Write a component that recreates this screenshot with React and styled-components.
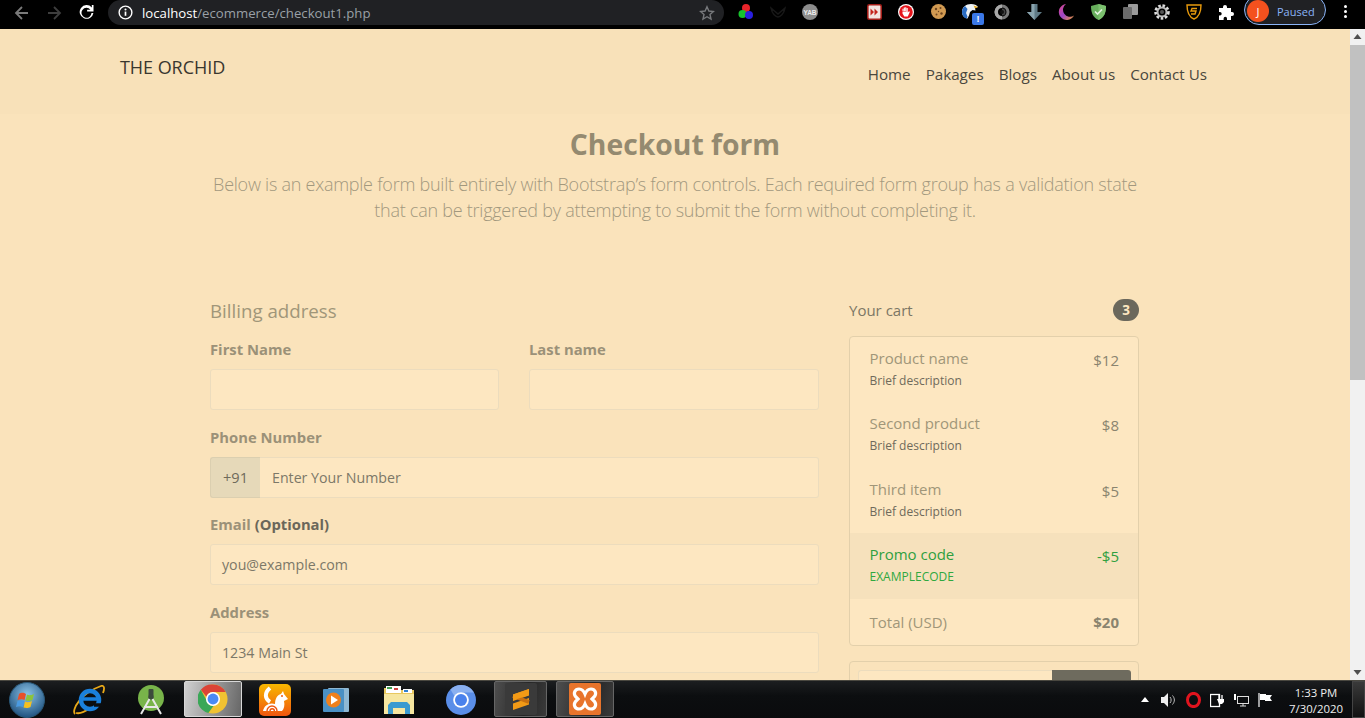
import React from "react";
import styled, { createGlobalStyle } from "styled-components";

const Global = createGlobalStyle`
  html, body { margin: 0; padding: 0; height: 100%; overflow: hidden; }
  body { font-family: "Open Sans", "Noto Sans", sans-serif; background: #000; }
  * { box-sizing: border-box; }
`;

const Screen = styled.div`
  width: 1365px; height: 718px; display: flex; flex-direction: column; overflow: hidden;
`;

/* ---------- browser toolbar ---------- */
const Toolbar = styled.header`
  height: 29px; flex: none; background: #000; display: flex; align-items: flex-start; overflow: hidden;
`;
const NavButtons = styled.div`
  width: 108px; height: 25px; padding-left: 6px; display: flex; align-items: center;
`;
const NavButton = styled.span`
  width: 32px; height: 23px; display: flex; align-items: center; justify-content: center;
`;
const Omnibox = styled.div`
  width: 616px; height: 25px; background: #202124; border-radius: 13px;
  display: flex; align-items: center; padding: 0 9px 0 10px; gap: 9px;
  font-size: 13.2px; color: #9aa0a6;
`;
const UrlText = styled.div`flex: 1; white-space: nowrap; strong { color: #fff; font-weight: 400; }`;
const Extensions = styled.div`display: flex; align-items: flex-start; height: 29px; margin-left: 6px;`;
const ExtSlot = styled.span`
  width: 32px; height: 23px; flex: none; display: flex; align-items: center; justify-content: center;
  position: relative;
`;
const ExtGap = styled.span`width: 32px; flex: none;`;
const ExtBadge = styled.span`
  position: absolute; right: 2px; top: 13px; width: 12px; height: 12px; background: #3b78e7; border-radius: 2px;
  color: #fff; font: 700 9px/12px "Liberation Sans", sans-serif; text-align: center;
`;
const ProfilePill = styled.div`
  width: 82px; height: 30px; margin: -5px 0 0 2px; border: 1px solid #8ab4f8; border-radius: 15px; background: #202124;
  display: flex; align-items: center; gap: 8px; padding: 2px 0 0 2px; color: #8ab4f8; font-size: 11px;
`;
const Avatar = styled.span`
  width: 22px; height: 22px; border-radius: 50%; background: #f4511e; color: #fff; font-size: 11px;
  display: flex; align-items: center; justify-content: center; flex: none;
`;
const MenuDots = styled.span`
  width: 20px; margin-left: 9px; display: flex; flex-direction: column; align-items: center; gap: 2px; padding-top: 5px;
  i { width: 3px; height: 3px; border-radius: 50%; background: #fff; display: block; }
`;

/* ---------- page ---------- */
const Middle = styled.div`flex: 1; min-height: 0; display: flex;`;
const Page = styled.main`
  flex: 1; min-width: 0; overflow: hidden; background: #fae3bb; color: #6f6a5b;
`;
const TopNav = styled.nav`
  height: 85px; background: #f8e1b9; padding: 0 143px 0 120px; display: flex; justify-content: space-between;
`;
const Brand = styled.a`
  font-size: 18px; line-height: 24px; color: #3a372f; margin-top: 26px; letter-spacing: -0.05px;
`;
const NavLinks = styled.ul`
  list-style: none; margin: 33px 0 0; padding: 0; display: flex; gap: 15px;
`;
const NavLink = styled.li`font-size: 15.2px; line-height: 24px; color: #4a473d;`;

const Hero = styled.section`text-align: center; padding-top: 11px; height: 182px;`;
const HeroTitle = styled.h2`
  margin: 0; font-size: 28.3px; line-height: 38px; font-weight: 700; color: #948a70;
`;
const Lead = styled.p`
  margin: 8px 0 0; font-size: 18px; line-height: 26px; font-weight: 300; color: #a2987e; letter-spacing: -0.25px;
`;
const Content = styled.div`
  width: 930px; margin-left: 210px; display: grid; grid-template-columns: 609px 290px; column-gap: 30px;
`;
const SectionTitle = styled.h4`
  margin: 1px 0 12px; font-size: 18.7px; line-height: 28px; font-weight: 400; color: #a09679;
`;
const FieldRow = styled.div`display: grid; grid-template-columns: 289px 290px; column-gap: 30px;`;
const Field = styled.div`margin-bottom: 14.5px;`;
const FieldLabel = styled.label`
  display: block; font-size: 14.8px; line-height: 24px; font-weight: 700; color: #9b9178; margin-bottom: 8px;
  span { color: #6b675a; }
`;
const InputBox = styled.div`
  height: 41px; border: 1px solid #ecdcbd; background: #fde7c1; border-radius: 3px; padding: 0 11px;
  font-size: 14.2px; line-height: 39px; color: #7c7868;
`;
const InputGroup = styled.div`display: flex;`;
const Prepend = styled.div`
  width: 50px; height: 41px; flex: none; border: 1px solid #dbcfb0; border-right: 0; background: #e6d9b9;
  border-radius: 3px 0 0 3px; text-align: center; font-size: 14.6px; line-height: 39px; color: #6f6a5b;
`;
const GroupInput = styled(InputBox)`flex: 1; border-radius: 0 3px 3px 0; border-left: 0; padding-left: 12px;`;

const CartHead = styled.div`
  height: 28px; margin: 0 0 12px; display: flex; align-items: center; justify-content: space-between;
  font-size: 15px; color: #7c7765;
`;
const Badge = styled.span`
  width: 26px; height: 22px; border-radius: 11px; background: #6b685c; color: #fde7c1;
  font-size: 13.5px; font-weight: 700; display: flex; align-items: center; justify-content: center;
`;
const CartList = styled.div`
  border: 1px solid #e3d0ab; border-radius: 4px; background: #fde7c1; overflow: hidden;
`;
const CartItem = styled.div`
  height: ${p => p.$h}px; padding: 9px 19px 0 19.5px; display: flex; justify-content: space-between;
  background: ${p => (p.$promo ? "#f6e1bc" : "transparent")};
  color: ${p => (p.$promo ? "#2f9f3f" : "#a09679")};
`;
const ItemName = styled.div`font-size: 15px; line-height: 24px;`;
const ItemDesc = styled.div`
  margin-top: 1px; font-size: 12px; line-height: 20px; color: ${p => (p.$promo ? "#2fa83f" : "#6f6a5b")};
`;
const ItemPrice = styled.div`
  font-size: 15px; line-height: 24px; margin-top: 2px;
  color: ${p => (p.$promo ? "#2f9f3f" : "#8a846f")};
  font-weight: ${p => (p.$bold ? 700 : 400)};
`;
const TotalName = styled(ItemName)`margin-top: 2px;`;
const PromoCard = styled.div`
  margin-top: 15px; height: 60px; border: 1px solid #e3d0ab; border-radius: 4px; background: #fae3bb; padding: 8px 7px 0 8px;
  display: flex;
`;
const PromoInput = styled.div`
  width: 195px; height: 41px; background: #fde7c1; border: 1px solid #ecdcbd; border-right: 0; border-radius: 3px 0 0 3px;
`;
const PromoButton = styled.div`
  width: 79px; height: 41px; background: #6e6b5e; border-radius: 0 3px 3px 0;
`;

/* ---------- scrollbar ---------- */
const Scrollbar = styled.aside`
  width: 15px; flex: none; background: #f1f1f1; display: flex; flex-direction: column; align-items: center;
`;
const ScrollArrow = styled.svg`width: 15px; height: 16px; flex: none;`;
const ScrollThumb = styled.div`width: 15px; height: 335px; background: #c1c1c1; flex: none;`;
const ScrollFill = styled.div`flex: 1;`;

/* ---------- taskbar ---------- */
const Taskbar = styled.footer`
  height: 38px; flex: none; display: flex; align-items: stretch; position: relative;
  background: linear-gradient(#1c1e20, #0c0e10 40%, #0a0b0d);
  border-top: 1px solid #4a4840; color: #fff;
`;
const TaskSlot = styled.span`
  width: ${p => p.$w}px; flex: none; display: flex; align-items: center; justify-content: center;
  margin-left: ${p => p.$ml || 0}px;
`;
const ActiveButton = styled(TaskSlot)`
  height: 36px; background: linear-gradient(100deg, #d0d0d0, #9a9a9a 50%, #666);
  border: 1px solid #d8d8d8; border-radius: 2px;
`;
const OpenButton = styled(TaskSlot)`
  height: 36px; background: linear-gradient(100deg, #4e4e4e, #262626 60%, #3a3a3a);
  border: 1px solid #666; border-radius: 2px;
`;
const Tray = styled.div`margin-left: auto; display: flex; align-items: center;`;
const TraySlot = styled.span`width: 24px; display: flex; align-items: center; justify-content: center;`;
const Clock = styled.div`
  width: 70px; margin-left: 4px; margin-right: 1px; padding-top: 2px; text-align: center; font-size: 11.4px; line-height: 16px; color: #eee;
`;
const ShowDesktop = styled.div`
  width: 13px; height: 100%; flex: none; background: linear-gradient(#3a3a3a, #111); border: 1px solid #444;
`;

/* ---------- drawings ---------- */
const Back = ({ c }) => (
  <svg width="16" height="16" viewBox="0 0 16 16" fill="none" stroke={c} strokeWidth="1.8"><path d="M14 8H2.5M8 2L2 8l6 6" /></svg>
);
const Forward = ({ c }) => (
  <svg width="16" height="16" viewBox="0 0 16 16" fill="none" stroke={c} strokeWidth="1.8"><path d="M2 8h11.5M8 2l6 6-6 6" /></svg>
);
const Reload = () => (
  <svg width="17" height="17" viewBox="0 0 16 16"><path d="M13 3.200V1l1.600 0v6h-6V5.400h3.100A4.700 4.700 0 1 0 12.700 8.500h1.800A6.500 6.500 0 1 1 13 3.200z" fill="#fff" /></svg>
);
const Info = () => (
  <svg width="15" height="15" viewBox="0 0 16 16" fill="none"><circle cx="8" cy="8" r="6.800" stroke="#fff" strokeWidth="1.500" /><path d="M8 7v4.500" stroke="#fff" strokeWidth="1.800" /><circle cx="8" cy="4.800" r="1.100" fill="#fff" /></svg>
);
const Star = () => (
  <svg width="16" height="16" viewBox="0 0 16 16" fill="none" stroke="#77797c" strokeWidth="1.400"><path d="M8 1.800l1.900 4.200 4.500.5-3.400 3 1 4.500L8 11.700 4 14l1-4.500-3.400-3 4.500-.5z" /></svg>
);

const Rgb = () => (
  <svg width="16" height="17" viewBox="0 0 16 17"><circle cx="8" cy="5" r="4" fill="#e8242a" /><circle cx="4.500" cy="11" r="4" fill="#17c22c" /><circle cx="11" cy="12" r="4" fill="#2a1fe0" /></svg>
);
const DarkBird = () => (
  <svg width="16" height="12" viewBox="0 0 16 12" fill="none" stroke="#181818" strokeWidth="1.500"><path d="M1 2c1 6 5 9 7 9s6-3 7-9l-7 6z" /></svg>
);
const Yab = () => (
  <svg width="16" height="16" viewBox="0 0 16 16"><circle cx="8" cy="8" r="8" fill="#8c8c8c" /><text x="8" y="10.500" textAnchor="middle" fontSize="6.500" fontWeight="700" fill="#eee" fontFamily="Liberation Sans">YAB</text></svg>
);
const RedPlay = () => (
  <svg width="15" height="16" viewBox="0 0 15 16"><rect x="0.800" y="0.800" width="13.400" height="14.400" rx="1.500" fill="#f3e4e0" stroke="#a31d18" strokeWidth="1.600" /><path d="M3.500 4.500l3.500 3.500-3.500 3.500zM7.500 4.500L11 8l-3.500 3.500z" fill="#c4241d" /></svg>
);
const StopHand = () => (
  <svg width="16" height="16" viewBox="0 0 16 16"><circle cx="8" cy="8" r="8" fill="#fff" /><circle cx="8" cy="8" r="6.800" fill="#e5141b" /><path d="M4.500 7V4.800h1V7zM5.800 7V3.500h1.100V7zM7.200 7V3.200h1.100V7zM8.600 7V4h1.100v4.500l1.300-1.300.9.600L9.800 12.500H6.300L4.500 9.500V7.500h4z" fill="#fff" /></svg>
);
const Cookie = () => (
  <svg width="15" height="15" viewBox="0 0 15 15"><circle cx="7.500" cy="7.500" r="7.500" fill="#d19a52" /><circle cx="5" cy="5" r="1.200" fill="#6e4520" /><circle cx="9.500" cy="4" r="1" fill="#6e4520" /><circle cx="10.500" cy="9.500" r="1.200" fill="#6e4520" /><circle cx="5.500" cy="10.500" r="1" fill="#6e4520" /><circle cx="7.500" cy="7.500" r=".7" fill="#6e4520" /></svg>
);
const Eagle = () => (
  <svg width="16" height="15" viewBox="0 0 16 15"><path d="M0 8C0 3 4 0 9 0c3 0 6 1 7 3l-3 1 .5 2.500-3-.5-2.500 2-1 3.500-1.500 3C2 14 0 11 0 8z" fill="#eef2f6" /><path d="M0 8c0-2.500 1-4.500 3-6l2.500 3-1.500 4 1.500 3.500-.7 2C2 14 0 11 0 8z" fill="#2a6cc4" /><path d="M11.500 1.500L16 3l-3 1.500z" fill="#e8a818" /></svg>
);
const GreyGear = () => (
  <svg width="16" height="16" viewBox="0 0 16 16"><circle cx="8" cy="8" r="6" fill="none" stroke="#7a7a7a" strokeWidth="3" /><path d="M8 .5a7.500 7.500 0 0 0 0 15v-3.500a4 4 0 0 1 0-8z" fill="#a8a8a8" /><path d="M8 4.500a3.500 3.500 0 0 1 0 7z" fill="#444" /><circle cx="8" cy="8" r="2" fill="#111" /></svg>
);
const DownArrow = () => (
  <svg width="15" height="16" viewBox="0 0 15 16"><path d="M4.500 0h6v8h4.500l-7.500 8L0 8h4.500z" fill="#5f7a86" /><path d="M4.500 0h3v16L0 8h4.500z" fill="#8aa4ae" /></svg>
);
const Moon = () => (
  <svg width="16" height="16" viewBox="0 0 16 16"><defs><linearGradient id="moonG" x1="0" y1="0" x2="1" y2="1"><stop offset="0" stopColor="#e04a8c" /><stop offset=".5" stopColor="#9c45c8" /><stop offset="1" stopColor="#f0a030" /></linearGradient></defs><path d="M8 0a8 8 0 1 0 8 11.500A7 7 0 0 1 8 0z" fill="url(#moonG)" /></svg>
);
const ShieldCheck = () => (
  <svg width="15" height="16" viewBox="0 0 15 16"><path d="M7.500 0L15 2c0 7-2 11.500-7.500 14C2 13.500 0 9 0 2z" fill="#67ae5c" /><path d="M7.500 0L15 2c0 7-2 11.500-7.500 14z" fill="#7cc06f" /><path d="M4 7.500l2.500 2.500L11 5.500" fill="none" stroke="#e4f4e0" strokeWidth="1.700" /></svg>
);
const Copies = () => (
  <svg width="15" height="15" viewBox="0 0 15 15"><rect x="5" y="0" width="10" height="11" rx="1" fill="#9a9a9a" /><rect x="0" y="3" width="9" height="12" rx="1" fill="#6c6c6c" /></svg>
);
const Gear = () => (
  <svg width="16" height="16" viewBox="0 0 16 16"><circle cx="8" cy="8" r="6" fill="none" stroke="#ddd" strokeWidth="3.500" strokeDasharray="2.400 1.600" /><circle cx="8" cy="8" r="4.500" fill="none" stroke="#bbb" strokeWidth="2" /><circle cx="8" cy="8" r="2" fill="#555" /></svg>
);
const SShield = () => (
  <svg width="16" height="17" viewBox="0 0 16 17" fill="none" stroke="#e89a0c" strokeWidth="1.400"><path d="M1 2c5 0 9 0 14 0 0 7-2 12-7 14C3 14 1 9 1 2z" /><path d="M11 5.500H6L5 8h5l-1 3H5" /></svg>
);
const Puzzle = () => (
  <svg width="16" height="16" viewBox="0 0 16 16"><path d="M1 4h4V3a2 2 0 0 1 4 0v1h4v4h1a2 2 0 0 1 0 4h-1v4H9v-1.500a1.700 1.700 0 0 0-3.400 0V16H1v-4.500h1a1.700 1.700 0 0 0 0-3.400H1z" fill="#fff" /></svg>
);

const Orb = () => (
  <svg width="36" height="36" viewBox="0 0 36 36"><defs><radialGradient id="orbG" cx=".5" cy=".35" r=".7"><stop offset="0" stopColor="#8cc4e8" /><stop offset="1" stopColor="#184a78" /></radialGradient></defs><circle cx="18" cy="18" r="17.500" fill="url(#orbG)" stroke="#2a5878" /><path d="M10 12c3-2 5-1 7 0l-1.500 6c-2-1-4-1-7 0z" fill="#e8502a" /><path d="M18 12.500c2 1 4 1 7-.5l-1.500 6c-3 1.500-5 1-7 .5z" fill="#8cc43c" /><path d="M8.500 19c3-1 5-1 7 0L14 25c-2-1-4-1-7 0z" fill="#4a9ae0" /><path d="M16 19.500c2 1 4 1 7-.5l-1.500 6c-3 1.500-5 1-7 .5z" fill="#f4c020" /></svg>
);
const IE = () => (
  <svg width="32" height="30" viewBox="0 0 32 30"><path d="M2 29C-2 25 8 8 28 1c3-1 4 2 2 7" fill="none" stroke="#e8a818" strokeWidth="1.800" /><path d="M3 28c4 1 10-2 14-5" fill="none" stroke="#e8a818" strokeWidth="1.800" /><circle cx="17" cy="15" r="9" fill="none" stroke="#1a80dc" strokeWidth="4.500" /><path d="M9 14h16" stroke="#1a80dc" strokeWidth="3.500" /><path d="M21 20h9" stroke="#0c0e10" strokeWidth="3.500" /></svg>
);
const AndroidStudio = () => (
  <svg width="26" height="30" viewBox="0 0 26 30"><circle cx="13" cy="13" r="13" fill="#78b44a" /><rect x="10.500" y="4" width="5" height="7" rx="1" fill="#3c4a3c" /><circle cx="13" cy="12" r="2.800" fill="#3c4a3c" /><path d="M11.500 14L3 29M14.500 14L23 29M6 22h14" fill="none" stroke="#e8e8e8" strokeWidth="2" /></svg>
);
const Chrome = () => (
  <svg width="30" height="30" viewBox="0 0 32 32"><circle cx="16" cy="16" r="15.500" fill="#f1c232" /><path d="M16 .5A15.500 15.500 0 0 1 29.500 8.500H16a7.500 7.500 0 0 0-7 5L3 6A15.500 15.500 0 0 1 16 .5z" fill="#db4437" /><path d="M3 6l6.500 12a7.500 7.500 0 0 0 7 5.500l-5.500 7.500A15.500 15.500 0 0 1 3 6z" fill="#3aa757" /><circle cx="16" cy="16" r="7.500" fill="#fff" /><circle cx="16" cy="16" r="5.800" fill="#4a8af4" /></svg>
);
const UC = () => (
  <svg width="32" height="32" viewBox="0 0 32 32"><defs><linearGradient id="ucG" x1="0.500" y1="0" x2="0.500" y2="1"><stop offset="0" stopColor="#f8b800" /><stop offset="1" stopColor="#f0560f" /></linearGradient></defs><rect width="32" height="32" rx="5" fill="url(#ucG)" /><path d="M11 4C5 9 6 15 11 18" fill="none" stroke="#fff" strokeWidth="4" /><path d="M4 27c1-6 7-9 12-7 0-5 2-9 6-10l2-3 1 3 4 5-4 2c1 4 0 8-2 10z" fill="#fff" /><path d="M8 27a5 5 0 0 1 10 0M11 27a2.200 2.200 0 0 1 4.400 0" fill="none" stroke="#f0560f" strokeWidth="1.400" /><circle cx="23" cy="12" r="1" fill="#f0560f" /></svg>
);
const Wmp = () => (
  <svg width="26" height="24" viewBox="0 0 26 24"><rect x="5" y="0" width="21" height="24" rx="1" fill="#8fb8d4" /><rect x="0" y="1" width="21" height="23" rx="1" fill="#4a90c4" /><circle cx="10.500" cy="12" r="7.500" fill="#f0801c" /><path d="M8 7.500l7 4.500-7 4.500z" fill="#fff" /></svg>
);
const Explorer = () => (
  <svg width="32" height="29" viewBox="0 0 32 29"><path d="M1 3h10l2 2h18v24H1z" fill="#e8c860" /><rect x="3" y="1" width="15" height="7" fill="#fff" /><rect x="4" y="2" width="5" height="2" fill="#40a050" /><rect x="11" y="3" width="4" height="2" fill="#d04040" /><rect x="20" y="4" width="9" height="4" fill="#fff" /><rect x="21" y="5" width="4" height="2" fill="#3080d0" /><path d="M1 9h30v20H1z" fill="#f6e6a0" /><path d="M5 29v-9l3-3h16l3 3v9h-5v-6H10v6z" fill="#3a9ad0" /></svg>
);
const Chromium = () => (
  <svg width="30" height="30" viewBox="0 0 30 30"><circle cx="15" cy="15" r="15" fill="#5a8ee8" /><path d="M15 0a15 15 0 0 1 13 7.500H15a7.500 7.500 0 0 0-6.500 3.700L4.500 4.500A15 15 0 0 1 15 0z" fill="#8ab0f0" /><circle cx="15" cy="15" r="7.800" fill="#fff" /><circle cx="15" cy="15" r="6" fill="#4a82ec" /></svg>
);
const Sublime = () => (
  <svg width="32" height="32" viewBox="0 0 32 32"><rect width="32" height="32" rx="2" fill="#3a3a3a" /><path d="M8 11.500L24 6v6.500L8 18zM24 15v6.500L8 27v-6.500z" fill="#f29a16" /><path d="M8 13l16 6" stroke="#c87010" strokeWidth="4" /><path d="M8 11.500L24 6v6L8 17.500z" fill="#f29a16" /></svg>
);
const Xampp = () => (
  <svg width="32" height="32" viewBox="0 0 32 32"><rect width="32" height="32" rx="2" fill="#e8742c" /><path d="M10 6c-4 0-6 4-3.500 7.500L9 16l-2.500 2.500C4 22 6 26 10 26c3 0 5-2.500 6-5 1 2.500 3 5 6 5 4 0 6-4 3.500-7.500L23 16l2.500-2.500C28 10 26 6 22 6c-3 0-5 2.500-6 5-1-2.500-3-5-6-5z" fill="none" stroke="#fff" strokeWidth="3.200" /></svg>
);
const TrayUp = () => <svg width="8" height="5" viewBox="0 0 8 5"><path d="M0 5l4-5 4 5z" fill="#fff" /></svg>;
const Speaker = () => (
  <svg width="16" height="14" viewBox="0 0 16 14"><path d="M0 4h3l4-4v14l-4-4H0z" fill="#eee" /><path d="M9 4c1.500 1.500 1.500 4.500 0 6M11.500 2.500c2.500 3 2.500 6 0 9" fill="none" stroke="#bbb" /></svg>
);
const Opera = () => (
  <svg width="15" height="16" viewBox="0 0 15 16"><ellipse cx="7.500" cy="8" rx="6" ry="6.600" fill="none" stroke="#e0141e" strokeWidth="3" /></svg>
);
const Plug = () => (
  <svg width="14" height="16" viewBox="0 0 14 16"><rect x="0.500" y="2.500" width="9" height="12" fill="none" stroke="#fff" strokeWidth="1.300" /><path d="M7 7h7v3l-2 2H9z" fill="#fff" /><path d="M9 3v4M12 3v4" stroke="#fff" strokeWidth="1.300" /></svg>
);
const Network = () => (
  <svg width="15" height="14" viewBox="0 0 15 14"><rect x="3.500" y="3.500" width="11" height="7" fill="none" stroke="#ddd" /><path d="M6 13h6M9 11v2" stroke="#ddd" /><rect x="0" y="1" width="2" height="6" fill="#fff" /></svg>
);
const Flag = () => (
  <svg width="14" height="14" viewBox="0 0 14 14"><path d="M1 0v14" stroke="#fff" strokeWidth="1.200" /><path d="M2 1h6v1h6l-2 3 2 3H7V7H2z" fill="#fff" /></svg>
);

const items = [
  { name: "Product name", price: "$12", h: 65 },
  { name: "Second product", price: "$8", h: 66 },
  { name: "Third item", price: "$5", h: 65 },
];

export default function App() {
  return (
    <Screen>
      <Global />
      <Toolbar>
        <NavButtons>
          <NavButton><Back c="#7a7a7a" /></NavButton>
          <NavButton><Forward c="#3e3e3e" /></NavButton>
          <NavButton><Reload /></NavButton>
        </NavButtons>
        <Omnibox>
          <Info />
          <UrlText><strong>localhost</strong>/ecommerce/checkout1.php</UrlText>
          <Star />
        </Omnibox>
        <Extensions>
          <ExtSlot><Rgb /></ExtSlot>
          <ExtSlot><DarkBird /></ExtSlot>
          <ExtSlot><Yab /></ExtSlot>
          <ExtGap />
          <ExtSlot><RedPlay /></ExtSlot>
          <ExtSlot><StopHand /></ExtSlot>
          <ExtSlot><Cookie /></ExtSlot>
          <ExtSlot><Eagle /><ExtBadge>!</ExtBadge></ExtSlot>
          <ExtSlot><GreyGear /></ExtSlot>
          <ExtSlot><DownArrow /></ExtSlot>
          <ExtSlot><Moon /></ExtSlot>
          <ExtSlot><ShieldCheck /></ExtSlot>
          <ExtSlot><Copies /></ExtSlot>
          <ExtSlot><Gear /></ExtSlot>
          <ExtSlot><SShield /></ExtSlot>
          <ExtSlot><Puzzle /></ExtSlot>
          <ProfilePill><Avatar>J</Avatar>Paused</ProfilePill>
          <MenuDots><i /><i /><i /></MenuDots>
        </Extensions>
      </Toolbar>

      <Middle>
        <Page>
          <TopNav>
            <Brand>THE ORCHID</Brand>
            <NavLinks>
              <NavLink>Home</NavLink>
              <NavLink>Pakages</NavLink>
              <NavLink>Blogs</NavLink>
              <NavLink>About us</NavLink>
              <NavLink>Contact Us</NavLink>
            </NavLinks>
          </TopNav>
          <Hero>
            <HeroTitle>Checkout form</HeroTitle>
            <Lead>
              Below is an example form built entirely with Bootstrap’s form controls. Each required form group has a validation state
              <br />
              that can be triggered by attempting to submit the form without completing it.
            </Lead>
          </Hero>
          <Content>
            <div>
              <SectionTitle>Billing address</SectionTitle>
              <FieldRow>
                <Field><FieldLabel>First Name</FieldLabel><InputBox /></Field>
                <Field><FieldLabel>Last name</FieldLabel><InputBox /></Field>
              </FieldRow>
              <Field>
                <FieldLabel>Phone Number</FieldLabel>
                <InputGroup><Prepend>+91</Prepend><GroupInput>Enter Your Number</GroupInput></InputGroup>
              </Field>
              <Field>
                <FieldLabel>Email <span>(Optional)</span></FieldLabel>
                <InputBox>you@example.com</InputBox>
              </Field>
              <Field>
                <FieldLabel>Address</FieldLabel>
                <InputBox>1234 Main St</InputBox>
              </Field>
            </div>
            <div>
              <CartHead>Your cart<Badge>3</Badge></CartHead>
              <CartList>
                {items.map(it => (
                  <CartItem key={it.name} $h={it.h}>
                    <div><ItemName>{it.name}</ItemName><ItemDesc>Brief description</ItemDesc></div>
                    <ItemPrice>{it.price}</ItemPrice>
                  </CartItem>
                ))}
                <CartItem $h={66} $promo>
                  <div><ItemName>Promo code</ItemName><ItemDesc $promo>EXAMPLECODE</ItemDesc></div>
                  <ItemPrice $promo>-$5</ItemPrice>
                </CartItem>
                <CartItem $h={46}>
                  <TotalName>Total (USD)</TotalName>
                  <ItemPrice $bold>$20</ItemPrice>
                </CartItem>
              </CartList>
              <PromoCard><PromoInput /><PromoButton /></PromoCard>
            </div>
          </Content>
        </Page>
        <Scrollbar>
          <ScrollArrow viewBox="0 0 15 16"><path d="M7.500 5L3.500 10h8z" fill="#505050" /></ScrollArrow>
          <ScrollThumb />
          <ScrollFill />
          <ScrollArrow viewBox="0 0 15 16"><path d="M7.500 11L3.500 6h8z" fill="#505050" /></ScrollArrow>
        </Scrollbar>
      </Middle>

      <Taskbar>
        <TaskSlot $w={54}><Orb /></TaskSlot>
        <TaskSlot $w={70}><IE /></TaskSlot>
        <TaskSlot $w={54}><AndroidStudio /></TaskSlot>
        <ActiveButton as="span" $w={58} $ml={6}><Chrome /></ActiveButton>
        <TaskSlot $w={66}><UC /></TaskSlot>
        <TaskSlot $w={56}><Wmp /></TaskSlot>
        <TaskSlot $w={70}><Explorer /></TaskSlot>
        <TaskSlot $w={54}><Chromium /></TaskSlot>
        <OpenButton as="span" $w={53} $ml={6}><Sublime /></OpenButton>
        <OpenButton as="span" $w={58} $ml={9}><Xampp /></OpenButton>
        <Tray>
          <TraySlot><TrayUp /></TraySlot>
          <TraySlot><Speaker /></TraySlot>
          <TraySlot><Opera /></TraySlot>
          <TraySlot><Plug /></TraySlot>
          <TraySlot><Network /></TraySlot>
          <TraySlot><Flag /></TraySlot>
          <Clock>1:33 PM<br />7/30/2020</Clock>
          <ShowDesktop />
        </Tray>
      </Taskbar>
    </Screen>
  );
}
